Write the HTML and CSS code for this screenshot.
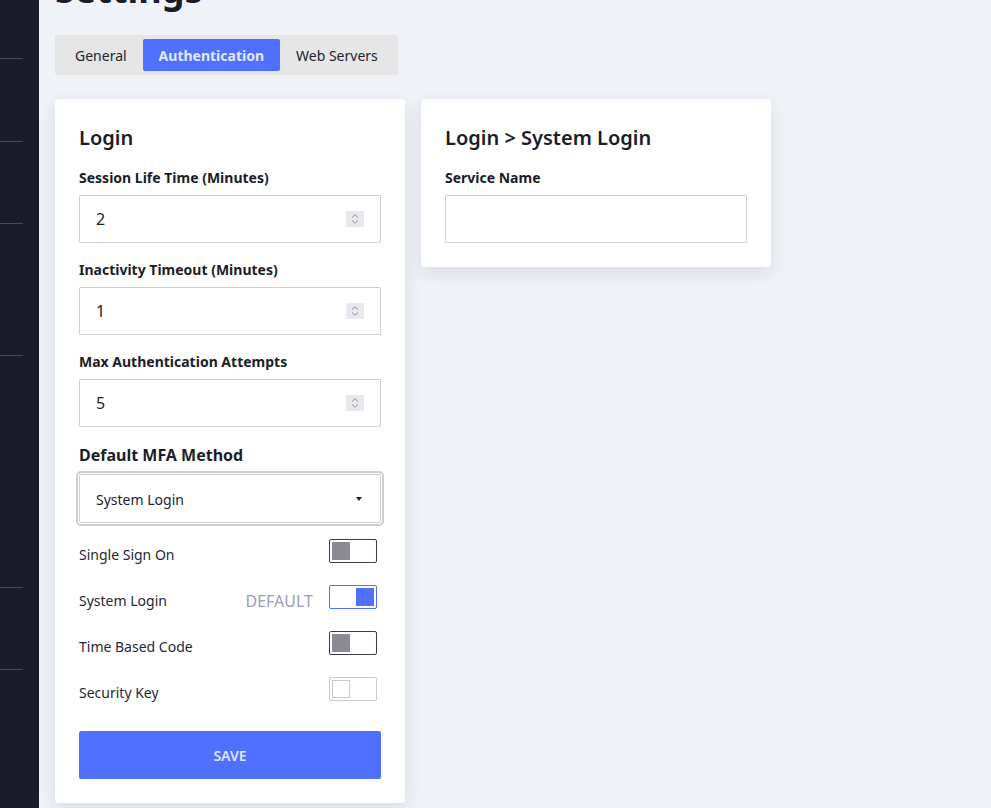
FILE: index.html
```html
<!DOCTYPE html>
<html lang="en">
<head>
<meta charset="utf-8">
<title>Settings</title>
<link rel="stylesheet" href="styles.css">
</head>
<body>
<div class="app">
  <nav class="sidebar">
    <div class="nav-sec s1"></div>
    <div class="nav-sec s2"></div>
    <div class="nav-sec s3"></div>
    <div class="nav-sec s4"></div>
    <div class="nav-sec s5"></div>
    <div class="nav-sec s6"></div>
  </nav>
  <main class="main">
    <h1 class="page-title">Settings</h1>
    <div class="tabs">
      <div class="tab">General</div>
      <div class="tab active">Authentication</div>
      <div class="tab">Web Servers</div>
    </div>
    <div class="cards">
      <section class="card">
        <h2 class="card-title">Login</h2>
        <div class="field">
          <div class="label">Session Life Time (Minutes)</div>
          <div class="input"><span class="value">2</span><span class="spin"><svg width="8" height="12" viewBox="0 0 8 12"><path d="M1 4.5 L4 1.8 L7 4.5 M1 7.5 L4 10.2 L7 7.5" fill="none" stroke="#8d8f9c" stroke-width="1"/></svg></span></div>
        </div>
        <div class="field">
          <div class="label">Inactivity Timeout (Minutes)</div>
          <div class="input"><span class="value">1</span><span class="spin"><svg width="8" height="12" viewBox="0 0 8 12"><path d="M1 4.5 L4 1.8 L7 4.5 M1 7.5 L4 10.2 L7 7.5" fill="none" stroke="#8d8f9c" stroke-width="1"/></svg></span></div>
        </div>
        <div class="field">
          <div class="label">Max Authentication Attempts</div>
          <div class="input"><span class="value">5</span><span class="spin"><svg width="8" height="12" viewBox="0 0 8 12"><path d="M1 4.5 L4 1.8 L7 4.5 M1 7.5 L4 10.2 L7 7.5" fill="none" stroke="#8d8f9c" stroke-width="1"/></svg></span></div>
        </div>
        <div class="label label-lg">Default MFA Method</div>
        <div class="select"><span class="sel-text">System Login</span><span class="caret"></span></div>
        <div class="toggles">
          <div class="trow"><span class="tlabel">Single Sign On</span><span class="tright"><span class="toggle off"><span class="knob"></span></span></span></div>
          <div class="trow"><span class="tlabel">System Login</span><span class="tright"><span class="default">DEFAULT</span><span class="toggle on"><span class="knob"></span></span></span></div>
          <div class="trow"><span class="tlabel">Time Based Code</span><span class="tright"><span class="toggle off"><span class="knob"></span></span></span></div>
          <div class="trow"><span class="tlabel">Security Key</span><span class="tright"><span class="toggle disabled"><span class="knob"></span></span></span></div>
        </div>
        <button class="save">SAVE</button>
      </section>
      <section class="card">
        <h2 class="card-title">Login &gt; System Login</h2>
        <div class="field last">
          <div class="label">Service Name</div>
          <div class="input"></div>
        </div>
      </section>
    </div>
  </main>
</div>
</body>
</html>
```

FILE: styles.css
```css
* { box-sizing: border-box; }
html, body { margin: 0; padding: 0; }
body {
  font-family: "Noto Sans", "Open Sans", sans-serif;
  background: #eff2f7;
  color: #1c1e2c;
  width: 991px;
  height: 808px;
  overflow: hidden;
}
.app { display: flex; height: 808px; }
.sidebar {
  width: 39px;
  flex: none;
  background: #1a1c2a;
  display: flex;
  flex-direction: column;
}
.nav-sec { width: 23px; border-bottom: 1px solid #474a59; }
.s1 { height: 59px; }
.s2 { height: 83px; }
.s3 { height: 82px; }
.s4 { height: 132px; }
.s5 { height: 232px; }
.s6 { height: 82px; }

.main { flex: 1; padding: 0 16px; }
.page-title {
  font-size: 36px;
  font-weight: 700;
  line-height: 40px;
  margin: -30px 0 25px;
  color: #1a1c29;
}
.tabs {
  display: inline-flex;
  background: #e6e6e7;
  padding: 4px;
  border-radius: 2px;
}
.tab {
  height: 32px;
  line-height: 32px;
  padding: 1px 16px 0;
  font-size: 14px;
  color: #22242f;
  border-radius: 2px;
}
.tab.active { background: #5070ff; color: #e3e8ff; font-weight: 700; }

.cards { display: flex; gap: 16px; align-items: flex-start; margin-top: 24px; }
.card {
  width: 350px;
  background: #fff;
  border-radius: 4px;
  padding: 24px;
  box-shadow: 0 6px 18px rgba(30, 40, 70, 0.10);
}
.card-title {
  margin: 0 0 15px;
  font-size: 20px;
  font-weight: 600;
  line-height: 30px;
  color: #1b1d2a;
}
.field { margin-bottom: 17px; }
.field.last { margin-bottom: 0; }
.label {
  font-size: 14px;
  font-weight: 700;
  line-height: 20px;
  margin-bottom: 7px;
  color: #1b1d29;
}
.label-lg { font-size: 16px; line-height: 22px; margin-bottom: 8px; }
.input {
  height: 48px;
  border: 1px solid #cfcfd3;
  border-radius: 1px;
  display: flex;
  align-items: center;
  justify-content: space-between;
  padding: 0 16px;
}
.value { font-size: 16px; color: #1c1e2a; }
.spin {
  width: 18px;
  height: 16px;
  background: #e8e8ee;
  display: flex;
  align-items: center;
  justify-content: center;
}
.spin svg { display: block; }

.select {
  height: 49px;
  border: 1px solid #cfcfd3;
  border-radius: 2px;
  outline: 2px solid #cdcdd2;
  outline-offset: 1px;
  display: flex;
  align-items: center;
  justify-content: space-between;
  padding: 1px 16px 0;
  margin-bottom: 16px;
}
.sel-text { font-size: 14px; color: #1f2130; }
.caret {
  width: 0; height: 0;
  border-left: 3.5px solid transparent;
  border-right: 3.5px solid transparent;
  border-top: 4px solid #1f2130;
  margin-right: 2px;
}

.toggles { display: flex; flex-direction: column; gap: 22px; }
.trow { display: flex; justify-content: space-between; align-items: center; height: 24px; padding-right: 4px; }
.tlabel { font-size: 14px; color: #252735; padding-top: 6px; }
.tright { display: flex; align-items: center; }
.default { font-size: 16px; color: #9a9eae; margin-right: 16px; padding-top: 7px; }
.toggle {
  width: 48px;
  height: 24px;
  border: 1px solid #3a3c4b;
  border-radius: 2px;
  display: flex;
  align-items: center;
  padding: 0 2px;
}
.knob { width: 18px; height: 18px; background: #8b8b94; }
.toggle.on { border-color: #5070ff; justify-content: flex-end; }
.toggle.on .knob { background: #5070ff; }
.toggle.disabled { border-color: #c9c9ce; }
.toggle.disabled .knob { background: #fff; border: 1px solid #c9c9ce; }

.save {
  display: block;
  width: 100%;
  height: 48px;
  margin-top: 30px;
  border: none;
  border-radius: 2px;
  background: #5070ff;
  color: #dfe4ff;
  font-family: inherit;
  font-size: 14px;
  font-weight: 600;
}
```
